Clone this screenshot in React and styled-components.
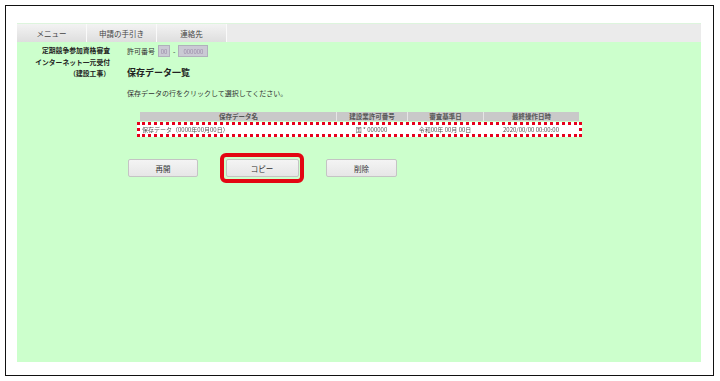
import React from 'react';
import styled, { createGlobalStyle } from 'styled-components';

const GlobalStyle = createGlobalStyle`
  html, body {
    margin: 0;
    background: #fff;
  }
  body {
    font-family: "Noto Sans CJK JP", "Noto Sans", sans-serif;
    color: #333;
  }
`;

export const Frame = styled.div`
  box-sizing: border-box;
  width: 709px;
  height: 371px;
  margin: 5px 0 0 5px;
  border: 1.5px solid #111;
  padding: 17px 12px 13px 11px;
  display: flex;
`;

export const Panel = styled.div`
  flex: 1;
  display: flex;
  flex-direction: column;
  border-top: 1px solid #ddf5dd;
`;

export const TabBar = styled.div`
  display: flex;
  height: 18px;
  background: #ebebeb;
`;

export const Tab = styled.div`
  width: 70px;
  display: flex;
  align-items: center;
  justify-content: center;
  font-size: 7.5px;
  color: #444;
  background: linear-gradient(#f3f3f3, #dedede);
  border-right: 1px solid #fafafa;
  box-sizing: border-box;
`;

export const Content = styled.div`
  flex: 1;
  background: #ccffcc;
  padding-top: 3px;
  display: grid;
  grid-template-columns: 93px 1fr;
  column-gap: 17px;
  align-items: start;
`;

export const SideTitle = styled.div`
  text-align: right;
  font-size: 6.8px;
  font-weight: bold;
  line-height: 11.5px;
  color: #222;
  white-space: nowrap;
`;

export const Main = styled.div`
  display: flex;
  flex-direction: column;
  align-items: flex-start;
`;

export const PermitRow = styled.div`
  display: flex;
  align-items: center;
  gap: 3px;
  height: 12px;
  font-size: 7px;
  color: #333;
`;

export const Masked = styled.span`
  display: inline-flex;
  align-items: center;
  justify-content: center;
  box-sizing: border-box;
  width: ${p => p.w}px;
  height: 12px;
  background: #cacad4;
  border: 1px solid #b0b0bc;
  font-size: 6px;
  color: #9a8aa8;
  overflow: hidden;
`;

export const Blur = styled.span`
  filter: blur(0.7px);
`;

export const Title = styled.div`
  margin-top: 10px;
  font-size: 9px;
  font-weight: bold;
  line-height: 12px;
  color: #222;
`;

export const Note = styled.div`
  margin-top: 9px;
  font-size: 7px;
  line-height: 10px;
  color: #333;
`;

export const Table = styled.div`
  margin: 14px 0 0 13px;
  width: 439px;
`;

const cols = '196px 71px 76px 96px';

export const HeadRow = styled.div`
  display: grid;
  grid-template-columns: ${cols};
  height: 9px;
  background: #c9c9c9;
`;

export const HeadCell = styled.div`
  font-size: 6.5px;
  font-weight: bold;
  color: #555;
  line-height: 9px;
  text-align: center;
  border-left: 1px solid ${p => (p.first ? 'transparent' : '#e6e6e6')};
`;

export const DataRow = styled.div`
  display: grid;
  grid-template-columns: ${cols};
  height: 9px;
  margin: 1px -3px 0;
  background: #fff;
  border: 3px dotted #e8001c;
`;

export const DataCell = styled.div`
  font-size: 6px;
  line-height: 9px;
  color: #555;
  text-align: ${p => p.align || 'center'};
  padding-left: ${p => (p.align === 'left' ? '2px' : '0')};
  filter: blur(0.6px);
  white-space: nowrap;
  overflow: hidden;
`;

export const Buttons = styled.div`
  margin-top: 16px;
  margin-left: 1px;
  display: flex;
  align-items: center;
  gap: 22px;
`;

export const Button = styled.button`
  box-sizing: border-box;
  width: ${p => p.w || 70}px;
  height: 18px;
  padding: 0;
  border: 1px solid #c4c4c4;
  border-radius: 2px;
  background: linear-gradient(#f4f4f4, #e6e6e6);
  font-family: inherit;
  font-size: 7.5px;
  color: #333;
`;

export const Highlight = styled.div`
  display: flex;
  padding: 2px 1.5px;
  border: 4px solid #e30613;
  border-radius: 6px;
`;

export default () => (
  <>
    <GlobalStyle />
    <Frame>
      <Panel>
        <TabBar>
          <Tab>メニュー</Tab>
          <Tab>申請の手引き</Tab>
          <Tab>連絡先</Tab>
        </TabBar>
        <Content>
          <SideTitle>
            定期競争参加資格審査<br />
            インターネット一元受付<br />
            （建設工事）
          </SideTitle>
          <Main>
            <PermitRow>
              許可番号
              <Masked w={12}><Blur>00</Blur></Masked>
              -
              <Masked w={30}><Blur>000000</Blur></Masked>
            </PermitRow>
            <Title>保存データ一覧</Title>
            <Note>保存データの行をクリックして選択してください。</Note>
            <Table>
              <HeadRow>
                <HeadCell first>保存データ名</HeadCell>
                <HeadCell>建設業許可番号</HeadCell>
                <HeadCell>審査基準日</HeadCell>
                <HeadCell>最終操作日時</HeadCell>
              </HeadRow>
              <DataRow>
                <DataCell align="left">保存データ（0000年00月00日）</DataCell>
                <DataCell>国 * 000000</DataCell>
                <DataCell>令和00年 00月 00日</DataCell>
                <DataCell>2020/00/00 00:00:00</DataCell>
              </DataRow>
            </Table>
            <Buttons>
              <Button>再開</Button>
              <Highlight>
                <Button w={73}>コピー</Button>
              </Highlight>
              <Button w={71}>削除</Button>
            </Buttons>
          </Main>
        </Content>
      </Panel>
    </Frame>
  </>
);
